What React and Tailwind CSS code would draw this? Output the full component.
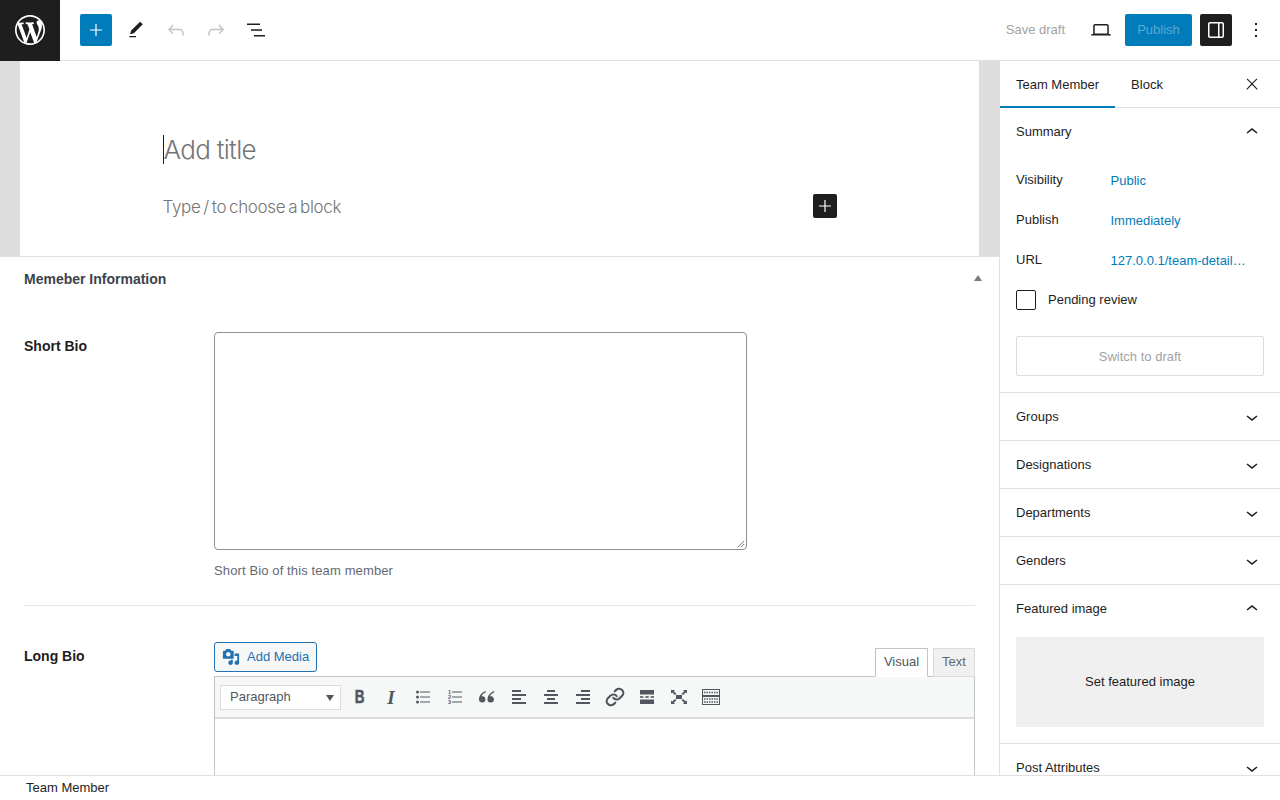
import React from 'react';
import { Link as LinkIcon } from 'lucide-react';

const WP_LOGO = 'M20 10c0-5.51-4.49-10-10-10C4.48 0 0 4.49 0 10c0 5.52 4.48 10 10 10 5.51 0 10-4.48 10-10zM7.78 15.37L4.37 6.22c.55-.02 1.17-.08 1.17-.08.5-.06.44-1.13-.06-1.11 0 0-1.45.11-2.37.11-.18 0-.37 0-.58-.01C4.12 2.69 6.87 1.11 10 1.11c2.33 0 4.45.87 6.05 2.34-.68-.11-1.65.39-1.65 1.58 0 .74.45 1.36.9 2.1.35.61.55 1.36.55 2.46 0 1.49-1.4 5-1.4 5l-3.03-8.37c.54-.02.82-.17.82-.17.5-.05.44-1.25-.06-1.22 0 0-1.44.12-2.38.12-.87 0-2.33-.12-2.33-.12-.5-.03-.56 1.2-.06 1.22l.92.08 1.26 3.41zM17.41 10c.24-.64.74-1.87.43-4.25.7 1.29 1.05 2.71 1.05 4.25 0 3.29-1.73 6.24-4.4 7.78.97-2.59 1.94-5.2 2.92-7.78zM6.1 18.09C3.12 16.65 1.11 13.53 1.11 10c0-1.3.23-2.48.72-3.59C3.25 10.3 4.67 14.2 6.1 18.09zm4.03-6.63l2.58 6.98c-.86.29-1.76.45-2.71.45-.79 0-1.57-.11-2.29-.33.81-2.38 1.62-4.74 2.42-7.1z';
const ADD_MEDIA = 'M13 11V4c0-.55-.45-1-1-1h-1.67L9 1H5L3.67 3H2c-.55 0-1 .45-1 1v7c0 .55.45 1 1 1h10c.55 0 1-.45 1-1zM7 4.5c1.38 0 2.5 1.12 2.5 2.5S8.38 9.5 7 9.5 4.5 8.38 4.5 7 5.62 4.5 7 4.5zM14 6h5v10.5c0 1.38-1.12 2.5-2.5 2.5S14 17.88 14 16.5s1.12-2.5 2.5-2.5c.17 0 .34.02.5.05V9h-3V6zm-4 8.05V13h2v3.5c0 1.38-1.12 2.5-2.5 2.5S7 17.88 7 16.5 8.12 14 9.5 14c.17 0 .34.02.5.05z';

const PLUS = 'M18 11.4h-5.4V6h-1.2v5.4H6v1.2h5.4V18h1.2v-5.4H18z';
const PEN = 'M20.1 5.1L16.9 2 6.2 12.7l-1.3 4.4 4.5-1.3L20.1 5.1zM4 20.8h8v-1.5H4v1.5z';
const UNDO = 'M18.3 11.7c-.6-.6-1.4-.9-2.3-.9H6.7l2.9-3.3-1.1-1-4.5 5L8.5 16l1-1-2.7-2.7H16c.5 0 .9.2 1.3.5 1 1 1 3.4 1 4.5v.3h1.5v-.2c0-1.5 0-4.3-1.5-5.7z';
const REDO = 'M15.6 6.5l-1.1 1 2.9 3.3H8c-.9 0-1.7.3-2.3.9-1.4 1.5-1.4 4.2-1.4 5.6v.2h1.5v-.3c0-1.1 0-3.5 1-4.5.3-.3.7-.5 1.3-.5h9.2L14.5 15l1.1 1.1 4.6-4.6-4.6-5z';
const LIST_VIEW = 'M3 5.5h13V7H3zM7 11.2h11v1.5H7zM10 17h11v1.5H10z';
const LAPTOP = 'M20.5 16h-.7V8c0-1.1-.9-2-2-2H6.2c-1.1 0-2 .9-2 2v8h-.7c-.8 0-1.5.7-1.5 1.5h20c0-.8-.7-1.5-1.5-1.5zM5.7 8c0-.3.2-.5.5-.5h11.6c.3 0 .5.2.5.5v7.6H5.7V8z';
const SIDEBAR = 'M18 4H6c-1.1 0-2 .9-2 2v12c0 1.1.9 2 2 2h12c1.1 0 2-.9 2-2V6c0-1.1-.9-2-2-2zm-4 14.5H6c-.3 0-.5-.2-.5-.5V6c0-.3.2-.5.5-.5h8v13zm4.5-.5c0 .3-.2.5-.5.5h-2.5v-13H18c.3 0 .5.2.5.5v12z';
const MORE = 'M13 19h-2v-2h2v2zm0-6h-2v-2h2v2zm0-6h-2V5h2v2z';
const CLOSE = 'M13 11.8l6.1-6.3-1-1-6.1 6.2-6.1-6.2-1 1 6.1 6.3-6.5 6.7 1 1 6.5-6.6 6.5 6.6 1-1z';
const UP = 'M6.5 12.4L12 8l5.5 4.4-.9 1.2L12 10l-4.5 3.6-1-1.2z';
const DOWN = 'M17.5 11.6L12 16l-5.5-4.4.9-1.2L12 14l4.5-3.6 1 1.2z';

const Icon = ({ d, className = 'w-6 h-6' }) => (
  <svg viewBox="0 0 24 24" className={className} fill="currentColor"><path d={d} /></svg>
);

const TopBar = () => (
  <header className="h-[61px] shrink-0 flex items-center border-b border-[#e0e0e0] bg-white">
    <div className="w-[60px] h-[61px] bg-[#1e1e1e] flex items-center justify-center text-white">
      <svg viewBox="0 0 20 20" className="w-[30px] h-[30px]" fill="currentColor"><path d={WP_LOGO} /></svg>
    </div>
    <div className="ml-5 flex items-center gap-2">
      <div className="w-8 h-8 rounded-[2px] bg-[#007cba] text-white flex items-center justify-center"><Icon d={PLUS} /></div>
      <div className="w-8 h-8 flex items-center justify-center text-[#1e1e1e]"><Icon d={PEN} className="w-5 h-5" /></div>
      <div className="w-8 h-8 flex items-center justify-center text-[#c4c4c4]"><Icon d={UNDO} /></div>
      <div className="w-8 h-8 flex items-center justify-center text-[#c4c4c4]"><Icon d={REDO} /></div>
      <div className="w-8 h-8 flex items-center justify-center text-[#1e1e1e]"><Icon d={LIST_VIEW} /></div>
    </div>
    <div className="ml-auto flex items-center">
      <span className="text-[13px] text-[#a2a2a2]">Save draft</span>
      <div className="ml-5 w-8 h-8 flex items-center justify-center text-[#1e1e1e]"><Icon d={LAPTOP} /></div>
      <div className="ml-[8px] w-[67px] h-8 rounded-[2px] bg-[#007cba] text-[#5ba9d3] text-[13px] flex items-center justify-center">Publish</div>
      <div className="ml-2 w-8 h-8 rounded-[2px] bg-[#1e1e1e] text-white flex items-center justify-center"><Icon d={SIDEBAR} /></div>
      <div className="ml-2 mr-2 w-8 h-8 flex items-center justify-center text-[#1e1e1e]"><Icon d={MORE} /></div>
    </div>
  </header>
);

const TitleArea = () => (
  <div className="flex h-[195px] shrink-0">
    <div className="w-5 bg-[#dddddd]" />
    <div className="flex-1 bg-white pt-[74px]">
      <div className="w-[674px] mx-auto">
        <div className="flex h-[29px] items-center">
          <span className="h-[29px] border-l border-[#1e1e1e] leading-[29px] text-[26px] font-light tracking-[-0.7px] text-[#757575] font-['Inter',sans-serif]">Add title</span>
        </div>
        <div className="mt-[30px] flex items-center justify-between h-6">
          <span className="mt-[3px] text-[17px] font-light tracking-[-0.35px] [word-spacing:-1.5px] text-[#757575] font-['Inter',sans-serif]">Type / to choose a block</span>
          <div className="w-6 h-6 rounded-[2px] bg-[#1e1e1e] text-white flex items-center justify-center"><Icon d={PLUS} /></div>
        </div>
      </div>
    </div>
    <div className="w-5 bg-[#dddddd]" />
  </div>
);

const BoldIcon = () => <span className="text-[18px] leading-none font-bold text-[#50575e] scale-x-75 [-webkit-text-stroke:0.6px_#50575e]">B</span>;
const ItalicIcon = () => <span className="text-[19px] leading-none font-bold italic text-[#50575e] font-['Liberation_Serif',serif]">I</span>;

const Lines = ({ rows }) => (
  <svg viewBox="0 0 14 14" className="w-[14px] h-[14px]" fill="#50575e">
    {rows.map((r, i) => <rect key={i} x={r[0]} y={i * 4} width={r[1]} height="2" />)}
  </svg>
);

const UlIcon = () => (
  <svg viewBox="0 0 14 14" className="w-[14px] h-[14px]" fill="#50575e">
    <circle cx="1.5" cy="2" r="1.5" /><circle cx="1.5" cy="7" r="1.5" /><circle cx="1.5" cy="12" r="1.5" />
    <rect x="4" y="1.5" width="10" height="1" /><rect x="4" y="6.5" width="10" height="1" /><rect x="4" y="11.5" width="10" height="1" />
  </svg>
);

const OlIcon = () => (
  <div className="flex items-center gap-[1px]">
    <div className="flex flex-col text-[5.5px] leading-[5px] font-bold text-[#50575e]"><span>1</span><span>2</span><span>3</span></div>
    <svg viewBox="0 0 10 14" className="w-[10px] h-[14px]" fill="#50575e">
      <rect y="1.5" width="10" height="1" /><rect y="6.5" width="10" height="1" /><rect y="11.5" width="10" height="1" />
    </svg>
  </div>
);

const QuoteIcon = () => (
  <svg viewBox="0 0 16 12" className="w-4 h-3" fill="#50575e">
    <path d="M7 1.2C4.5 2.2 3 3.6 2.7 5.2A3.2 3.2 0 1 1 0 8.2C0 5 2.6 1.6 6.4 0zM15.5 1.2C13 2.2 11.5 3.6 11.2 5.2a3.2 3.2 0 1 1-2.7 3C8.5 5 11.1 1.6 14.9 0z" />
  </svg>
);

const MoreIcon = () => (
  <svg viewBox="0 0 14 14" className="w-[14px] h-[14px]" fill="#50575e">
    <rect width="14" height="4.5" /><rect y="6.2" width="3.4" height="1.6" /><rect x="5.3" y="6.2" width="3.4" height="1.6" /><rect x="10.6" y="6.2" width="3.4" height="1.6" /><rect y="9.5" width="14" height="4.5" />
  </svg>
);

const FullscreenIcon = () => (
  <svg viewBox="0 0 16 14" className="w-4 h-[14px]" fill="#50575e">
    <path d="M0 0h4L2.8 1.2 5.6 4 4 5 1.2 2.4 0 3.6zM16 0h-4l1.2 1.2L10.4 4 12 5l2.8-2.6L16 3.6zM0 14h4l-1.2-1.2L5.6 10 4 9l-2.8 2.6L0 10.4zM16 14h-4l1.2-1.2L10.4 10 12 9l2.8 2.6 1.2-1.2zM5 5h6v4H5z" />
  </svg>
);

const KeyboardIcon = () => (
  <svg viewBox="0 0 18 16" className="w-[18px] h-4" fill="none" stroke="#50575e">
    <rect x=".5" y=".5" width="17" height="6" />
    <rect x=".5" y="7.5" width="17" height="8" />
    <path d="M2 3.5h14M2 10h14M2 13h14" strokeWidth="1.6" strokeDasharray="1.5 1" />
  </svg>
);

const tools = [
  <BoldIcon />,
  <ItalicIcon />,
  <UlIcon />,
  <OlIcon />,
  <QuoteIcon />,
  <Lines rows={[[0, 9], [0, 14], [0, 9], [0, 14]]} />,
  <Lines rows={[[3, 8], [0, 14], [3, 8], [0, 14]]} />,
  <Lines rows={[[5, 9], [0, 14], [5, 9], [0, 14]]} />,
  <LinkIcon size={20} strokeWidth={2.6} color="#50575e" />,
  <MoreIcon />,
  <FullscreenIcon />,
  <KeyboardIcon />,
];

const MetaBox = () => (
  <section className="flex-1 min-h-0 bg-white border-t border-[#e0e0e0] text-[#1e1e1e] overflow-hidden">
    <div className="h-[45px] flex items-center justify-between pl-6 pr-[17px]">
      <h2 className="text-[14px] font-bold text-[#3c434a]">Memeber Information</h2>
      <div className="w-0 h-0 border-x-[4px] border-x-transparent border-b-[6px] border-b-[#787c82] mt-[-3px]" />
    </div>
    <div className="mx-6 w-[951px] h-[304px] pt-[30px] flex border-b border-[#e5e5e5]">
      <div className="w-[190px] text-[14px] font-bold leading-[28px]">Short Bio</div>
      <div>
        <div className="w-[533px] h-[218px] border border-[#8c8f94] rounded-[4px] relative">
          <svg viewBox="0 0 10 10" className="absolute right-[1px] bottom-[1px] w-2 h-2" stroke="#555" fill="none"><path d="M1 9l8-8M5 9l4-4" /></svg>
        </div>
        <p className="mt-[12px] text-[13px] leading-[18px] tracking-[0.12px] text-[#646970]">Short Bio of this team member</p>
      </div>
    </div>
    <div className="mx-6 w-[951px] pt-[36px] flex">
      <div className="w-[190px] text-[14px] font-bold leading-[28px]">Long Bio</div>
      <div className="w-[761px]">
        <div className="flex items-end justify-between h-[34px]">
          <div className="self-start h-[30px] w-[103px] border border-[#2271b1] rounded-[3px] bg-[#f6f7f7] text-[#2271b1] text-[13px] flex items-center pl-[7px] gap-[7px]">
            <svg viewBox="0 0 20 20" className="w-[18px] h-[18px]" fill="currentColor"><path d={ADD_MEDIA} /></svg>
            <span>Add Media</span>
          </div>
          <div className="flex items-end gap-[5px] mb-[-1px] relative z-10">
            <div className="h-[29px] w-[53px] pb-[2px] border border-[#c3c4c7] border-b-white bg-white text-[13px] text-[#50575e] flex items-center justify-center">Visual</div>
            <div className="h-[29px] w-[42px] pb-[2px] border border-[#dcdcde] bg-[#f0f0f1] text-[13px] text-[#646970] flex items-center justify-center">Text</div>
          </div>
        </div>
        <div className="h-[120px] border border-[#c3c4c7]">
          <div className="h-[42px] bg-[#f6f7f7] border-b-2 border-[#dcdcde] flex items-center pl-[5px]">
            <div className="w-[121px] h-[25px] bg-white border border-[#dcdcde] text-[13px] text-[#50575e] flex items-center justify-between pl-[9px] pr-[6px]">
              <span>Paragraph</span>
              <span className="w-0 h-0 border-x-[4px] border-x-transparent border-t-[6px] border-t-[#50575e] mt-[2px]" />
            </div>
            <div className="ml-[2px] flex">
              {tools.map((t, i) => (
                <div key={i} className="w-8 h-8 flex items-center justify-center">{t}</div>
              ))}
            </div>
          </div>
        </div>
      </div>
    </div>
  </section>
);

const PanelHeader = ({ title, open }) => (
  <div className="h-[47px] flex items-center justify-between pl-4 pr-4 text-[13px] text-[#1e1e1e]">
    <span>{title}</span>
    <Icon d={open ? UP : DOWN} />
  </div>
);

const MetaRow = ({ label, value }) => (
  <div className="h-10 flex items-center text-[13px]">
    <span className="w-[94.5px] text-[#1e1e1e] mt-[-2px]">{label}</span>
    <span className="text-[#007cba]">{value}</span>
  </div>
);

const Sidebar = () => (
  <aside className="w-[281px] shrink-0 border-l border-[#e0e0e0] bg-white overflow-hidden">
    <div className="h-[47px] flex items-stretch border-b border-[#e0e0e0] text-[13px] text-[#1e1e1e] relative">
      <div className="w-[115px] pt-[3px] flex items-center justify-center border-b-2 border-[#007cba] mb-[-1px]">Team Member</div>
      <div className="w-[64px] pt-[1px] flex items-center justify-center">Block</div>
      <div className="ml-auto mr-[19px] flex items-center"><Icon d={CLOSE} className="w-[18px] h-[18px]" /></div>
    </div>
    <div className="border-b border-[#e0e0e0] h-[285px]">
      <PanelHeader title="Summary" open />
      <div className="px-4 pt-[6px]">
        <MetaRow label="Visibility" value="Public" />
        <MetaRow label="Publish" value="Immediately" />
        <MetaRow label="URL" value="127.0.0.1/team-detail…" />
        <div className="h-[38px] flex items-center gap-3 text-[13px] text-[#1e1e1e]">
          <div className="w-5 h-5 border border-[#1e1e1e] rounded-[2px]" />
          <span>Pending review</span>
        </div>
        <div className="mt-[17px] h-10 pt-[1px] border border-[#dddddd] rounded-[2px] text-[13px] text-[#a2a2a2] flex items-center justify-center">Switch to draft</div>
      </div>
    </div>
    {['Groups', 'Designations', 'Departments', 'Genders'].map((name) => (
      <div key={name} className="border-b border-[#e0e0e0]"><PanelHeader title={name} /></div>
    ))}
    <div className="border-b border-[#e0e0e0] h-[159px]">
      <PanelHeader title="Featured image" open />
      <div className="mx-4 mt-[5px] h-[90px] bg-[#f0f0f0] text-[13px] text-[#1e1e1e] flex items-center justify-center">Set featured image</div>
    </div>
    <PanelHeader title="Post Attributes" />
  </aside>
);

export default function App() {
  return (
    <div className="w-[1280px] h-[800px] flex flex-col overflow-hidden bg-white font-['Liberation_Sans',Arial,sans-serif]">
      <TopBar />
      <main className="flex-1 min-h-0 flex">
        <div className="w-[999px] shrink-0 flex flex-col">
          <TitleArea />
          <MetaBox />
        </div>
        <Sidebar />
      </main>
      <footer className="h-[25px] shrink-0 border-t border-[#e0e0e0] bg-white pl-[26px] text-[13px] leading-[23px] text-[#1e1e1e]">Team Member</footer>
    </div>
  );
}
